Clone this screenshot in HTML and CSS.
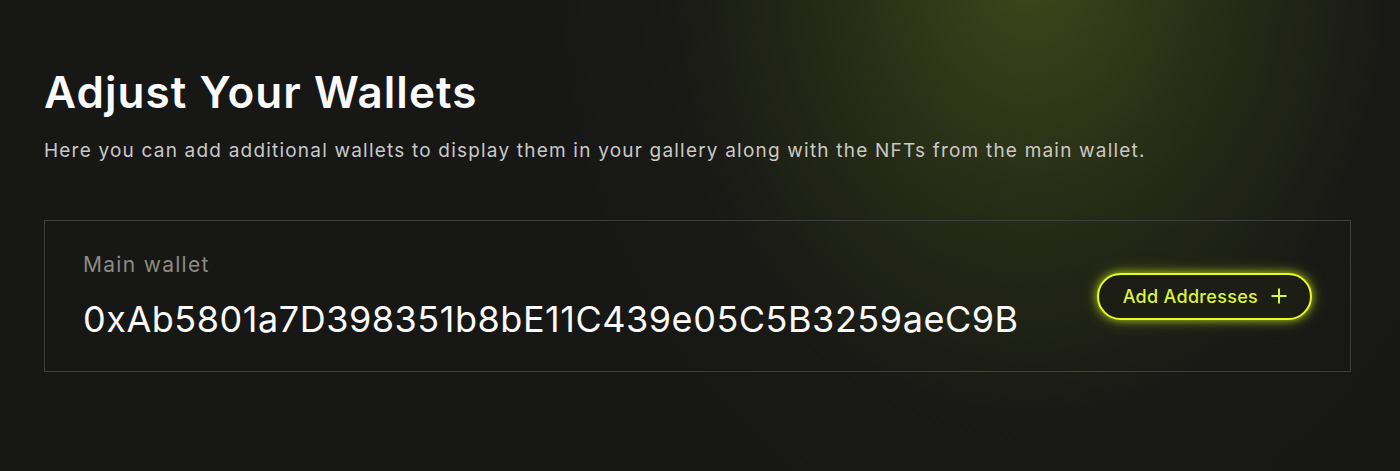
FILE: index.html
```html
<!DOCTYPE html>
<html lang="en">
<head>
<meta charset="utf-8">
<title>Adjust Your Wallets</title>
<link rel="stylesheet" href="styles.css">
</head>
<body>
<main class="page">
  <section class="wallets">
    <h1 class="title">Adjust Your Wallets</h1>
    <p class="subtitle">Here you can add additional wallets to display them in your gallery along with the NFTs from the main wallet.</p>
    <div class="card">
      <div class="card-info">
        <div class="label">Main wallet</div>
        <div class="address">0xAb5801a7D398351b8bE11C439e05C5B3259aeC9B</div>
      </div>
      <button class="add-btn" type="button">
        <span>Add Addresses</span>
        <svg class="plus" width="18" height="18" viewBox="0 0 18 18" aria-hidden="true">
          <path d="M9 1.5V16.5M1.5 9H16.5" stroke="currentColor" stroke-width="2" fill="none"/>
        </svg>
      </button>
    </div>
  </section>
</main>
</body>
</html>
```

FILE: styles.css
```css
html, body {
  margin: 0;
  padding: 0;
}
body {
  width: 1400px;
  height: 471px;
  overflow: hidden;
  background-color: #171716;
  background-image:
    radial-gradient(ellipse 500px 620px at 1030px -30px, rgba(62, 74, 26, 0.95) 0%, rgba(46, 54, 22, 0.62) 42%, rgba(30, 34, 20, 0.25) 72%, rgba(23, 23, 22, 0) 100%);
  font-family: Inter, "Noto Sans", sans-serif;
  color: #fff;
}
.page {
  padding: 66px 49px 0 44px;
}
.wallets {
  display: flex;
  flex-direction: column;
}
.title {
  margin: 0;
  font-size: 44px;
  line-height: 52px;
  font-weight: 600;
  letter-spacing: 1.05px;
  color: #fafafa;
}
.subtitle {
  margin: 20px 0 0;
  font-size: 19px;
  line-height: 26px;
  color: #c9c9c6;
  letter-spacing: 1.2px;
}
.card {
  margin-top: 56px;
  border: 1px solid #3e3e3c;
  height: 152px;
  box-sizing: border-box;
  padding: 0 38px;
  display: flex;
  align-items: center;
  justify-content: space-between;
}
.card-info {
  display: flex;
  flex-direction: column;
  gap: 19px;
}
.label {
  font-size: 21px;
  line-height: 26px;
  letter-spacing: 1.3px;
  color: #8b8b80;
}
.address {
  font-size: 36px;
  line-height: 44px;
  letter-spacing: 0.53px;
  color: #fafafa;
}
.add-btn {
  display: flex;
  align-items: center;
  gap: 12px;
  height: 47px;
  padding: 0 22px 0 24px;
  margin-right: 0;
  border: 2px solid #e4fb24;
  border-radius: 24px;
  background: #1c1e16;
  color: #dcf538;
  font-family: Inter, "Noto Sans", sans-serif;
  font-size: 18px;
  font-weight: 500;
  letter-spacing: 0.3px;
  box-shadow: 0 0 8px rgba(214, 250, 30, 0.75), 0 0 18px rgba(214, 250, 30, 0.25);
  cursor: pointer;
}
.plus {
  display: block;
}
```
